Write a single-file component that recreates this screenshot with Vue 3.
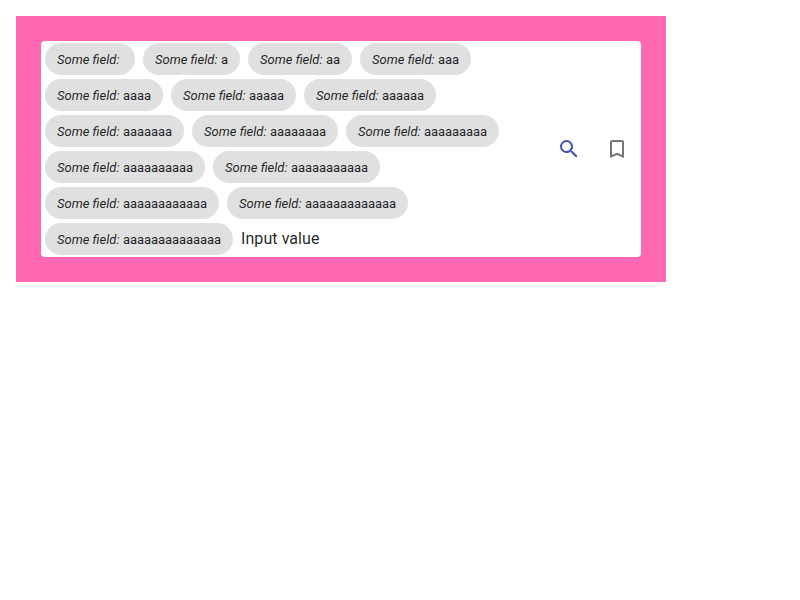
<script setup>
const chips = Array.from({ length: 15 }, (_, i) => 'a'.repeat(i))
</script>

<template>
  <div class="frame">
    <div class="search">
      <div class="chips">
        <div v-for="c in chips" :key="c.length" class="chip"><em>Some field:</em><span>{{ c }}</span></div>
        <div class="value">Input value</div>
      </div>
      <div class="actions">
        <button class="btn primary" aria-label="Search">
          <svg viewBox="0 0 24 24"><path d="M15.5 14h-.79l-.28-.27A6.471 6.471 0 0 0 16 9.5 6.5 6.5 0 1 0 9.5 16c1.61 0 3.09-.59 4.23-1.57l.27.28v.79l5 4.99L20.49 19l-4.99-5zm-6 0C7.01 14 5 11.99 5 9.5S7.01 5 9.5 5 14 7.01 14 9.5 11.99 14 9.5 14z" /></svg>
        </button>
        <button class="btn" aria-label="Bookmark">
          <svg viewBox="0 0 24 24"><path d="M17 3H7c-1.1 0-1.99.9-1.99 2L5 21l7-3 7 3V5c0-1.1-.9-2-2-2zm0 15l-5-2.18L7 18V5h10v13z" /></svg>
        </button>
      </div>
    </div>
  </div>
</template>

<style scoped>
.frame {
  box-sizing: border-box;
  width: 650px;
  margin: 16px;
  padding: 25px;
  background: #ff69b4;
  font-family: Roboto, sans-serif;
  color: rgba(0, 0, 0, 0.87);
}
.search {
  display: flex;
  align-items: center;
  background: #fff;
  border-radius: 4px;
}
.chips {
  flex: 1;
  display: flex;
  flex-wrap: wrap;
  gap: 4px 8px;
  padding: 2px 4px;
}
.chip {
  height: 32px;
  padding: 0 12px;
  display: flex;
  align-items: center;
  border-radius: 16px;
  background: #e0e0e0;
  font-size: 13px;
  white-space: nowrap;
}
.chip em {
  width: 63px;
  margin-right: 3px;
}
.chip span {
  letter-spacing: -0.071px;
}
.value {
  height: 32px;
  line-height: 32px;
  font-size: 16px;
  letter-spacing: 0.07px;
}
.actions {
  display: flex;
}
.btn {
  width: 48px;
  height: 48px;
  padding: 12px;
  border: 0;
  background: none;
  color: rgba(0, 0, 0, 0.54);
}
.btn.primary {
  color: #3f51b5;
}
.btn svg {
  display: block;
  width: 24px;
  height: 24px;
  fill: currentColor;
}
</style>

<style>
body {
  margin: 0;
}
#app {
  display: flow-root;
}
</style>
